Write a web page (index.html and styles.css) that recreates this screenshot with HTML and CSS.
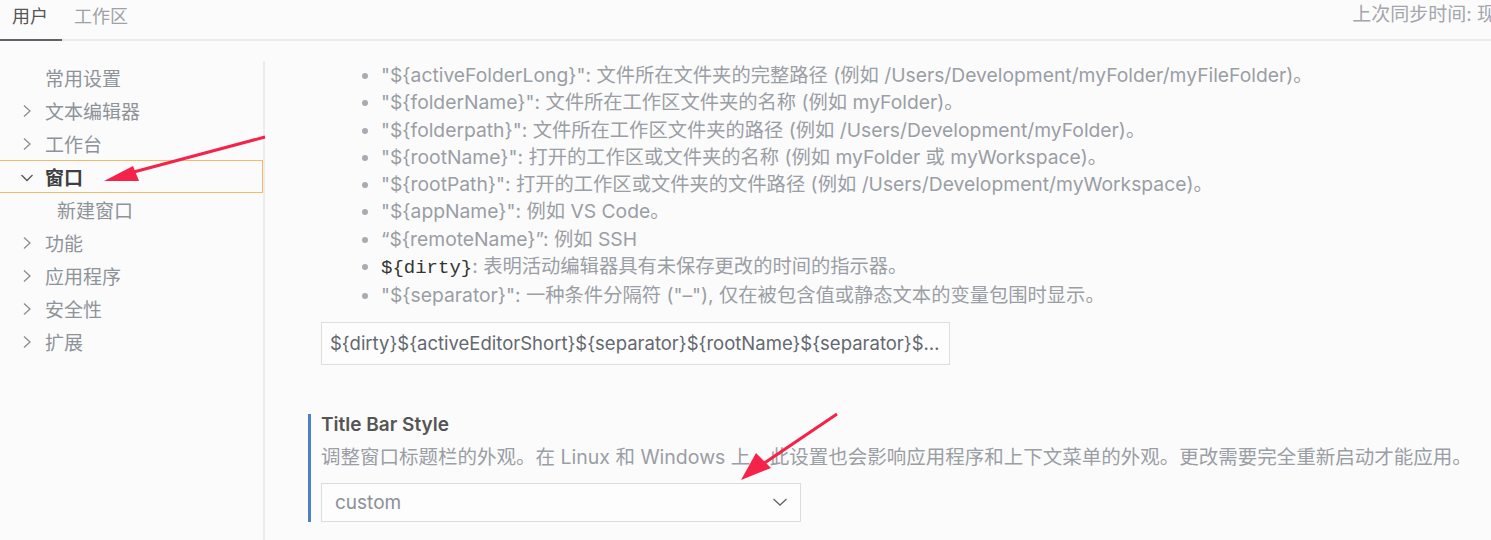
FILE: index.html
```html
<!DOCTYPE html>
<html lang="zh-CN">
<head>
    <meta charset="UTF-8">
    <title>设置</title>
    <link rel="stylesheet" href="styles.css">
</head>
<body>

    <!-- Top tabs -->
    <div class="tabs">
        <span class="tab active">用户</span>
        <span class="tab">工作区</span>
        <span class="sync">上次同步时间: 现在</span>
    </div>

    <div class="main">
        <!-- Settings tree -->
        <ul class="tree">
            <li class="node leaf">常用设置</li>
            <li class="node"><svg class="chev" width="10" height="14" viewBox="0 0 10 14"><path d="M2 1.5 L8 7 L2 12.5" fill="none" stroke="#8a8e94" stroke-width="1.3"/></svg>文本编辑器</li>
            <li class="node"><svg class="chev" width="10" height="14" viewBox="0 0 10 14"><path d="M2 1.5 L8 7 L2 12.5" fill="none" stroke="#8a8e94" stroke-width="1.3"/></svg>工作台</li>
            <li class="node open"><svg class="chev-down" width="14" height="10" viewBox="0 0 14 10"><path d="M1.5 2 L7 7.5 L12.5 2" fill="none" stroke="#555" stroke-width="1.3"/></svg>窗口</li>
            <li class="node child">新建窗口</li>
            <li class="node"><svg class="chev" width="10" height="14" viewBox="0 0 10 14"><path d="M2 1.5 L8 7 L2 12.5" fill="none" stroke="#8a8e94" stroke-width="1.3"/></svg>功能</li>
            <li class="node"><svg class="chev" width="10" height="14" viewBox="0 0 10 14"><path d="M2 1.5 L8 7 L2 12.5" fill="none" stroke="#8a8e94" stroke-width="1.3"/></svg>应用程序</li>
            <li class="node"><svg class="chev" width="10" height="14" viewBox="0 0 10 14"><path d="M2 1.5 L8 7 L2 12.5" fill="none" stroke="#8a8e94" stroke-width="1.3"/></svg>安全性</li>
            <li class="node"><svg class="chev" width="10" height="14" viewBox="0 0 10 14"><path d="M2 1.5 L8 7 L2 12.5" fill="none" stroke="#8a8e94" stroke-width="1.3"/></svg>扩展</li>
        </ul>

        <!-- Settings content -->
        <div class="content">
            <div class="block">
                <ul class="vars">
                    <li>"${activeFolderLong}": 文件所在文件夹的完整路径 (例如 /Users/Development/myFolder/myFileFolder)。</li>
                    <li>"${folderName}": 文件所在工作区文件夹的名称 (例如 myFolder)。</li>
                    <li>"${folderpath}": 文件所在工作区文件夹的路径 (例如 /Users/Development/myFolder)。</li>
                    <li>"${rootName}": 打开的工作区或文件夹的名称 (例如 myFolder 或 myWorkspace)。</li>
                    <li>"${rootPath}": 打开的工作区或文件夹的文件路径 (例如 /Users/Development/myWorkspace)。</li>
                    <li>"${appName}": 例如 VS Code。</li>
                    <li>“${remoteName}”: 例如 SSH</li>
                    <li><code>${dirty}</code>: 表明活动编辑器具有未保存更改的时间的指示器。</li>
                    <li>"${separator}": 一种条件分隔符 ("–"), 仅在被包含值或静态文本的变量包围时显示。</li>
                </ul>
                <div class="text-input">${dirty}${activeEditorShort}${separator}${rootName}${separator}${appName}</div>
            </div>

            <div class="setting">
                <div class="setting-title">Title Bar Style</div>
                <div class="setting-desc">调整窗口标题栏的外观。在 Linux 和 Windows 上，此设置也会影响应用程序和上下文菜单的外观。更改需要完全重新启动才能应用。</div>
                <div class="select">
                    <span>custom</span>
                    <svg width="16" height="10" viewBox="0 0 16 10"><path d="M1.5 2 L8 8 L14.5 2" fill="none" stroke="#666" stroke-width="1.3"/></svg>
                </div>
            </div>
        </div>
    </div>

    <!-- Annotation arrows drawn over the screenshot -->
    <svg class="arrows" width="1491" height="540" viewBox="0 0 1491 540">
        <line x1="265" y1="137" x2="130" y2="173" stroke="#f5224a" stroke-width="3"/>
        <polygon points="104,181 133,166 139,181" fill="#f5224a"/>
        <line x1="837" y1="414" x2="760" y2="466" stroke="#f5224a" stroke-width="3"/>
        <polygon points="741,480 756,453 771,468" fill="#f5224a"/>
    </svg>

</body>
</html>
```

FILE: styles.css
```css
/* General Reset */
html, body {
    margin: 0;
    padding: 0;
    height: 100%;
}

body {
    background-color: #fbfbfb;
    font-family: Inter, "Noto Sans CJK SC", sans-serif;
    color: #9a9ea5;
    overflow: hidden;
    position: relative;
}

/* Top tabs */
.tabs {
    display: flex;
    align-items: flex-end;
    height: 39px;
    border-bottom: 2px solid #ececec;
    white-space: nowrap;
}

.tab {
    font-size: 18px;
    line-height: 30px;
    padding: 0 13px 7px 12px;
    color: #9ea2a8;
    margin-bottom: -2px;
    border-bottom: 2px solid transparent;
}

.tab.active {
    color: #555;
    border-bottom-color: #5f6368;
    padding-right: 14px;
}

.sync {
    margin-left: auto;
    margin-right: -24px;
    font-size: 19px;
    line-height: 30px;
    padding-bottom: 9px;
    color: #a3a6ab;
}

/* Layout */
.main {
    display: flex;
    height: calc(100% - 41px);
}

/* Settings tree */
.tree {
    list-style: none;
    margin: 20px 0 0 0;
    padding: 0;
    width: 263px;
    border-right: 2px solid #ececec;
    flex-shrink: 0;
}

.node {
    display: flex;
    align-items: center;
    height: 33px;
    padding-left: 45px;
    font-size: 19px;
    color: #8e939a;
    box-sizing: border-box;
    position: relative;
}

.chev {
    position: absolute;
    left: 22px;
    top: 10px;
}

.chev-down {
    position: absolute;
    left: 20px;
    top: 12px;
}

.node.open {
    border: 1px solid #f6b96a;
    border-left: none;
    color: #3f3f3f;
    font-weight: bold;
}

.node.child {
    padding-left: 57px;
}

/* Content */
.content {
    flex: 1;
    padding-left: 43px;
}

.block {
    padding-left: 13px;
}

.vars {
    margin: 21px 0 0 0;
    padding-left: 60px;
    font-size: 19.3px;
    line-height: 27.3px;
    white-space: nowrap;
}

.vars li::marker {
    color: #a8abb0;
}

.vars code {
    font-family: "Liberation Mono", monospace;
    font-size: 19px;
    color: #333;
}

.text-input {
    margin-top: 12px;
    width: 629px;
    height: 43px;
    box-sizing: border-box;
    border: 1px solid #dedede;
    background-color: #fdfdfd;
    padding: 0 8px;
    font-size: 18.5px;
    line-height: 41px;
    color: #646870;
    white-space: nowrap;
    overflow: hidden;
    text-overflow: ellipsis;
}

/* Setting item */
.setting {
    margin-top: 49px;
    border-left: 3px solid #4a82c4;
    padding-left: 10px;
}

.setting-title {
    font-size: 19px;
    line-height: 22px;
    font-weight: 600;
    color: #555;
}

.setting-desc {
    margin-top: 10px;
    font-size: 19.5px;
    line-height: 22px;
    white-space: nowrap;
}

.select {
    margin-top: 15px;
    width: 480px;
    height: 39px;
    box-sizing: border-box;
    border: 1px solid #dcdcdc;
    background-color: #fdfdfd;
    display: flex;
    align-items: center;
    justify-content: space-between;
    padding: 0 12px 0 13px;
    font-size: 19px;
    color: #8c9097;
}

/* Annotation arrows */
.arrows {
    position: absolute;
    left: 0;
    top: 0;
    pointer-events: none;
}
```
